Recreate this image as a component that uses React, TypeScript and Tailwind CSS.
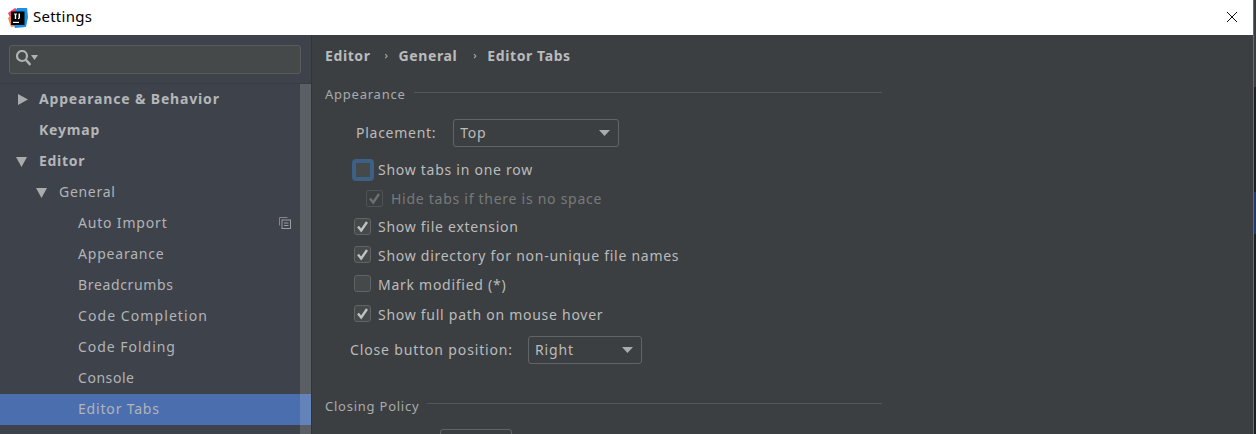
const treeRows = [
  { label: "Appearance & Behavior", indent: "pl-[39px]", bold: true, arrow: "right", arrowX: "left-[17px]", track: "tracking-[0.83px]" },
  { label: "Keymap", indent: "pl-[39px]", bold: true, track: "tracking-[0.8px]" },
  { label: "Editor", indent: "pl-[39px]", bold: true, arrow: "down", arrowX: "left-[16px]", track: "tracking-[0.7px]" },
  { label: "General", indent: "pl-[59px]", arrow: "down", arrowX: "left-[36px]", track: "tracking-[0.7px]" },
  { label: "Auto Import", indent: "pl-[78px]", copy: true, track: "tracking-[0.82px]" },
  { label: "Appearance", indent: "pl-[78px]", track: "tracking-[0.8px]" },
  { label: "Breadcrumbs", indent: "pl-[78px]", track: "tracking-[0.65px]" },
  { label: "Code Completion", indent: "pl-[78px]", track: "tracking-[1.08px]" },
  { label: "Code Folding", indent: "pl-[78px]", track: "tracking-[0.97px]" },
  { label: "Console", indent: "pl-[78px]", track: "tracking-[0.55px]" },
  { label: "Editor Tabs", indent: "pl-[78px]", selected: true, track: "tracking-[0.82px]" },
];

function Logo() {
  return (
    <svg width="20" height="20" viewBox="0 0 20 20" className="shrink-0">
      <path d="M0 5 L7 0 L11 3 L3 12 Z" fill="#f0446e" />
      <path d="M0 10 L3 19 L8 18 L4 7 Z" fill="#f5804a" />
      <path d="M9 0 L19 0 L20 9 L18 19 L7 20 L4 12 Z" fill="#1d8fe8" />
      <rect x="3" y="3.5" width="13.5" height="13.5" fill="#000" />
      <rect x="5" y="13.8" width="6" height="1.2" fill="#fff" />
      <path d="M6 5.5 H9 V6.5 H8.2 V11 H6.8 V6.5 H6 Z M10.5 5.5 H12 V9.5 Q12 11.2 10 11.2 V10.1 Q10.5 10.1 10.5 9.5 Z" fill="#fff" />
    </svg>
  );
}

function Triangle({ dir }: { dir: string }) {
  return (
    <svg width="11" height="11" viewBox="0 0 11 11">
      <path d={dir === "right" ? "M1 0 L11 5.5 L1 11 Z" : "M0 1 H11 L5.5 11 Z"} fill="#a9abad" />
    </svg>
  );
}

function Check({ disabled }: { disabled?: boolean }) {
  return (
    <svg width="13" height="13" viewBox="0 0 13 13">
      <path d="M2 6.5 L5.2 10.5 L11 2" fill="none" stroke={disabled ? "#6e7070" : "#bfc1c3"} strokeWidth="2.4" />
    </svg>
  );
}

function Box({ checked, focused, disabled }: { checked?: boolean; focused?: boolean; disabled?: boolean }) {
  if (focused) {
    return <span className="h-[22px] w-[22px] shrink-0 rounded-[4px] border-[4px] border-[#3d6185] bg-[#45494a]" />;
  }
  return (
    <span
      className={
        disabled
          ? "flex h-[17px] w-[17px] shrink-0 items-center justify-center rounded-[2px] border border-[#505354] bg-[#3c3f41]"
          : "flex h-[17px] w-[17px] shrink-0 items-center justify-center rounded-[3px] border border-[#616466] bg-[#45494a]"
      }
    >
      {checked && <Check disabled={disabled} />}
    </span>
  );
}

function Combo({ value, className }: { value: string; className: string }) {
  return (
    <div className={`flex h-[28px] items-center justify-between rounded-[3px] border border-[#626567] pl-[6px] pr-[8px] ${className}`}>
      <span className="mb-[2px] text-[#bbbbbb]">{value}</span>
      <svg width="11" height="6" viewBox="0 0 11 6">
        <path d="M0 0 H11 L5.5 6 Z" fill="#a9abad" />
      </svg>
    </div>
  );
}

function SectionTitle({ title, lineClass }: { title: string; lineClass: string }) {
  return (
    <div className="flex h-[20px] w-[557px] items-center gap-[8px] tracking-[0.76px]">
      <span className="text-[13px] text-[#a9abad]">{title}</span>
      <span className={`h-px flex-1 bg-[#53565a] ${lineClass}`} />
    </div>
  );
}

function Option({ label, checked, disabled, focused, height, low }: { label: string; checked?: boolean; disabled?: boolean; focused?: boolean; height: string; low?: boolean }) {
  return (
    <div className={`flex items-center ${height} ${disabled ? "gap-[8px] pl-[41px]" : "gap-[7px] pl-[29px]"}`}>
      <span className="flex w-[17px] items-center justify-center">
        <Box checked={checked} disabled={disabled} focused={focused} />
      </span>
      <span className={`${low ? "mt-[2px]" : ""} ${disabled ? "text-[#777a7c]" : "text-[#bbbbbb]"}`}>{label}</span>
    </div>
  );
}

export default function App() {
  return (
    <div className="flex h-[434px] w-[1256px] overflow-hidden bg-[#3c3f41] text-[14px] tracking-[0.73px] [font-family:'Noto_Sans',sans-serif]">
      <div className="flex min-w-0 flex-1 flex-col">
        <div className="flex h-[35px] shrink-0 items-center bg-white pl-[8px] pr-[15px]">
          <Logo />
          <span className="mb-[2px] ml-[5px] text-[15px] tracking-[0.25px] text-black">Settings</span>
          <svg width="12" height="12" viewBox="0 0 12 12" className="ml-auto mb-[2px]">
            <path d="M1 1 L11 11 M11 1 L1 11" stroke="#111" strokeWidth="1" />
          </svg>
        </div>
        <div className="flex min-h-0 flex-1">
          <aside className="relative w-[311px] shrink-0 bg-[#3e424b]">
            <div className="h-[49px] border-b border-[#383b41] pl-[9px] pr-[10px] pt-[10px]">
              <div className="flex h-[29px] items-center rounded-[3px] border border-[#585c5c] bg-[#45494a] pl-[6px]">
                <svg width="15" height="16" viewBox="0 0 15 16" className="mb-[3px]">
                  <circle cx="6" cy="6" r="5" fill="none" stroke="#afb1b3" strokeWidth="2.2" />
                  <path d="M9.5 9.5 L14.5 15" stroke="#afb1b3" strokeWidth="2.6" />
                </svg>
                <svg width="7" height="5" viewBox="0 0 7 5" className="mb-[5px]">
                  <path d="M0 0 H7 L3.5 5 Z" fill="#afb1b3" />
                </svg>
              </div>
            </div>
            {treeRows.map((r) => (
              <div
                key={r.label + r.indent}
                className={`relative flex h-[31px] items-center ${r.indent} ${r.track} ${r.selected ? "bg-[#4b6eaf]" : ""} ${r.bold ? "font-bold text-[#b4b6b8]" : "text-[#b2b4b6]"}`}
              >
                {r.arrow && (
                  <span className={`absolute top-[10px] flex ${r.arrowX}`}>
                    <Triangle dir={r.arrow} />
                  </span>
                )}
                <span className="mb-[2px]">{r.label}</span>
                {r.copy && (
                  <svg width="12" height="12" viewBox="0 0 12 12" className="absolute left-[279px] top-[9px]">
                    <path d="M0.5 8.5 V0.5 H8.5" fill="none" stroke="#83878c" />
                    <rect x="3" y="3" width="8.5" height="8.5" fill="none" stroke="#9a9ea2" />
                    <path d="M5 6 H9.5 M5 8.5 H9.5" stroke="#9a9ea2" />
                  </svg>
                )}
              </div>
            ))}
            <div className="absolute bottom-0 right-0 top-[49px] w-[11px] bg-white/15" />
          </aside>
          <div className="w-px shrink-0 bg-[#333538]" />
          <main className="min-w-0 flex-1 pl-[13px]">
            <div className="flex h-[40px] items-center gap-[13px] font-bold tracking-[0.6px] text-[#b9bbbd]">
              <span>Editor</span>
              <span className="-mr-[3px] ml-[1px] text-[11px] font-normal">›</span>
              <span>General</span>
              <span className="-mr-[3px] ml-[3px] text-[11px] font-normal">›</span>
              <span>Editor Tabs</span>
            </div>
            <div className="mt-[10px]">
              <SectionTitle title="Appearance" lineClass="mb-[6px]" />
            </div>
            <div className="mt-[14px] flex h-[28px] items-center gap-[17px] pl-[31px] text-[#bbbbbb]">
              <span className="mb-[2px]">Placement:</span>
              <Combo value="Top" className="w-[166px]" />
            </div>
            <div className="mt-[8px]">
              <Option label="Show tabs in one row" focused height="h-[29px]" />
              <Option label="Hide tabs if there is no space" checked disabled height="h-[28px]" />
              <Option label="Show file extension" checked height="h-[28px]" />
              <Option label="Show directory for non-unique file names" checked low height="h-[29px]" />
              <Option label="Mark modified (*)" low height="h-[29px]" />
              <div className="h-px" />
              <Option label="Show full path on mouse hover" checked low height="h-[29px]" />
            </div>
            <div className="mt-[8px] flex h-[28px] items-center gap-[15px] pl-[25px] tracking-[0.85px] text-[#bbbbbb]">
              <span className="mb-[2px]">Close button position:</span>
              <Combo value="Right" className="w-[114px]" />
            </div>
            <div className="mt-[33px]">
              <SectionTitle title="Closing Policy" lineClass="mb-[8px]" />
            </div>
            <div className="ml-[115px] mt-[12px] h-[28px] w-[72px] rounded-[3px] border border-[#626567]" />
          </main>
        </div>
      </div>
      <div className="flex w-[3px] shrink-0">
        <div className="w-px bg-[#2f78bd]" />
        <div className="flex flex-1 flex-col">
          <div className="h-[87px] bg-[#3a3d40]" />
          <div className="h-[105px] bg-[#1f2022]" />
          <div className="h-[42px] bg-[#1f3b6b]" />
          <div className="flex-1 bg-[#1f2022]" />
        </div>
      </div>
    </div>
  );
}
